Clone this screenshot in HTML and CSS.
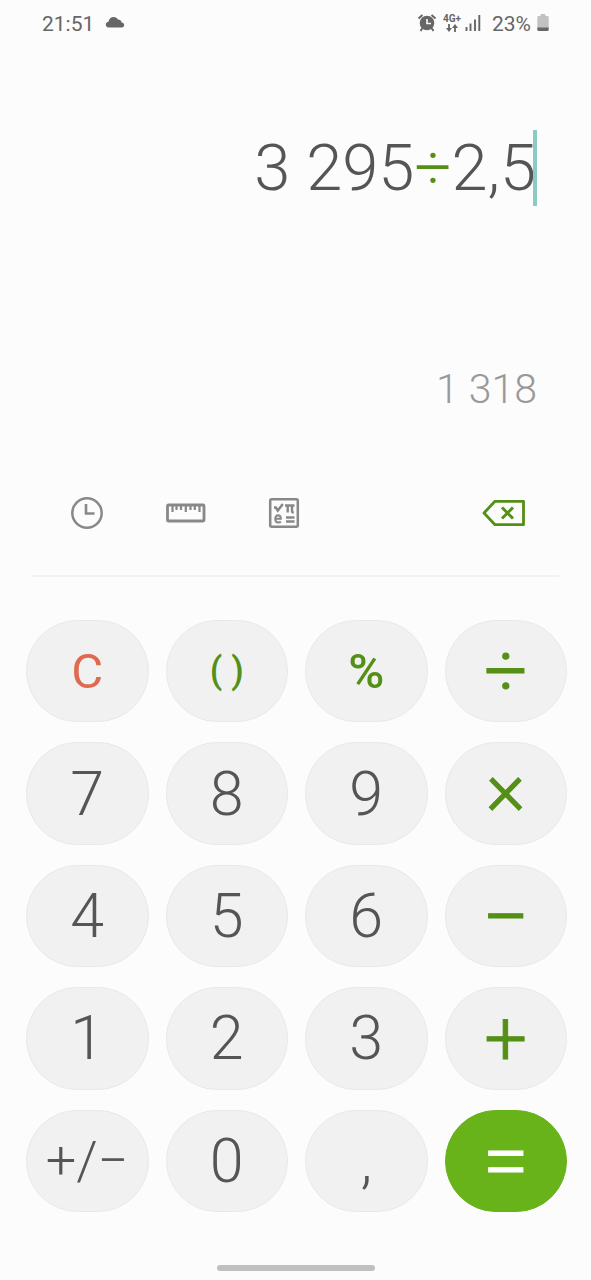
FILE: index.html
```html
<!DOCTYPE html>
<html lang="en">
<head>
<meta charset="utf-8">
<meta name="viewport" content="width=device-width, initial-scale=1">
<title>Calculator</title>
<link rel="stylesheet" href="styles.css">
</head>
<body>
<header class="status">
  <time class="status-text">21:51</time>
  <svg class="cloud" width="20" height="12" viewBox="0 0 20 12" aria-hidden="true"><path fill="currentColor" d="M4 11.500C1.500 11.500.8 10 .8 8.600c0-1.700 1.300-2.700 2.700-2.900C4 2.800 6 1 8.600 1c2 0 3.500 1 4.300 2.600 2 0 3.500 1.300 3.700 3 1.500.2 2.600 1.100 2.600 2.500 0 1.500-1 2.400-2.400 2.400z"/></svg>
  <div class="status-right">
    <svg width="20" height="20" viewBox="0 0 20 20" aria-hidden="true"><circle cx="10" cy="10" r="7.300" fill="currentColor"/><path d="M1.500 5.500l4-3.500M18.500 5.500l-4-3.500M5.500 15l-2 3M14.500 15l2 3" stroke="currentColor" stroke-width="2" fill="none"/><path d="M10 6v4.500h4" stroke="#fcfcfc" stroke-width="1.600" fill="none"/></svg>
    <div class="network">
      <span>4G+</span>
      <svg width="12" height="8" viewBox="0 0 12 8" aria-hidden="true"><path d="M3 0v5M9 8V3" stroke="currentColor" stroke-width="1.800"/><path d="M0 4h6L3 8zM6 4h6L9 0z" fill="currentColor"/></svg>
    </div>
    <svg width="16" height="18" viewBox="0 0 16 18" aria-hidden="true"><path d="M1.500 13v4M5.500 9.500V17M10 5.500V17M14.300 1v16" stroke="currentColor" stroke-width="1.900"/></svg>
    <span class="status-text percent">23%</span>
    <svg width="12" height="18" viewBox="0 0 12 18" aria-hidden="true"><path d="M1.500 2H3.500V1q0-1 1-1h3q1 0 1 1v1h2q1.200 0 1.200 1.200V14H.3V3.200Q.3 2 1.500 2z" fill="#c2c2c2"/><path d="M.3 13.500h11.400v2q0 1.500-1.500 1.500H1.800Q.3 17 .3 15.500z" fill="currentColor"/></svg>
  </div>
</header>
<main class="calculator">
  <section class="display" aria-label="Display">
    <div class="expression"><span class="formula">3 295<span class="operator">÷</span>2,5</span><span class="caret"></span></div>
    <output class="result">1 318</output>
  </section>
  <nav class="tools" aria-label="Tools">
    <button class="tool" type="button" aria-label="History"><svg width="34" height="34" viewBox="0 0 34 34"><g fill="none" stroke="currentColor"><circle cx="17" cy="17" r="14.700" stroke-width="2.500"/><path d="M16 8v9.500H24.500" stroke-width="2.600"/></g></svg></button>
    <button class="tool" type="button" aria-label="Unit converter"><svg width="40" height="20" viewBox="0 0 40 20"><g fill="none" stroke="currentColor"><rect x="1.500" y="2" width="36.500" height="16" rx="1" stroke-width="2.800"/><path d="M6.500 3v6M10.500 3v4M15 3v4M19.800 3v6M24.500 3v4M28.800 3v4M33.500 3v6" stroke-width="2.200"/></g></svg></button>
    <button class="tool" type="button" aria-label="Scientific mode"><svg width="32" height="32" viewBox="0 0 32 32"><g fill="none" stroke="currentColor"><rect x="2.200" y="2.200" width="27.600" height="27.600" rx="1.500" stroke-width="2.500"/><path d="M6 10.500h1.800l2 3L14.800 7" stroke-width="2.500"/><path d="M17 8.500h9.500M19.700 9v6.500M24 9v5.200q0 1.300 1.800 1" stroke-width="2.400"/><path d="M18 20.500h8.500M18 24.500h8.500" stroke-width="2.500"/><path d="M7.500 21.700h5.300q0-3.500-2.600-3.500-2.900 0-2.900 3.700 0 3.500 3.200 3.500 1.400 0 2.400-.8" stroke-width="2"/></g></svg></button>
    <button class="tool backspace" type="button" aria-label="Backspace"><svg width="44" height="28" viewBox="0 0 44 28"><g fill="none" stroke="currentColor"><path d="M13 2.300H41.500v23.400H13L2 14z" stroke-width="2.800" stroke-linejoin="round"/><path d="M20 8.500l11 11M31 8.500l-11 11" stroke-width="3"/></g></svg></button>
  </nav>
  <section class="keypad" aria-label="Keypad">
    <button class="key clear" type="button">C</button>
    <button class="key brackets" type="button">( )</button>
    <button class="key modulo" type="button">%</button>
    <button class="key math" type="button">÷</button>
    <button class="key" type="button">7</button>
    <button class="key" type="button">8</button>
    <button class="key" type="button">9</button>
    <button class="key math times" type="button">×</button>
    <button class="key" type="button">4</button>
    <button class="key" type="button">5</button>
    <button class="key" type="button">6</button>
    <button class="key math wide minus" type="button">−</button>
    <button class="key" type="button">1</button>
    <button class="key" type="button">2</button>
    <button class="key" type="button">3</button>
    <button class="key math" type="button">+</button>
    <button class="key sign" type="button">+/−</button>
    <button class="key" type="button">0</button>
    <button class="key" type="button">,</button>
    <button class="key math wide equals" type="button">=</button>
  </section>
</main>
<div class="home-bar"></div>
</body>
</html>
```
FILE: styles.css
```css
* {
  box-sizing: border-box;
}

body {
  display: flex;
  flex-direction: column;
  min-height: 100vh;
  margin: 0;
  background: #fcfcfc;
  color: #555;
  font-family: Roboto, "Liberation Sans", sans-serif;
}

button {
  padding: 0;
  border: 0;
  background: none;
  color: inherit;
  font: inherit;
}

svg {
  display: block;
}

.status {
  display: flex;
  align-items: center;
  height: 46px;
  padding: 0 42px;
  color: #666;
}

.status-text {
  padding-top: 1px;
  font-size: 21px;
  line-height: 24px;
}

.cloud {
  margin: 0 0 2px 11px;
}

.status-right {
  display: flex;
  align-items: center;
  margin-left: auto;
}

.network {
  display: flex;
  flex-direction: column;
  align-items: center;
  margin: 0 4px 0 6px;
  font-size: 10px;
  font-weight: 700;
  line-height: 10px;
}

.percent {
  margin: 0 6px 0 11px;
}

.calculator {
  display: flex;
  flex: 1;
  flex-direction: column;
}

.display {
  display: flex;
  flex-direction: column;
  align-items: flex-end;
  height: 434px;
  padding: 84px 54px 0 32px;
}

.expression {
  display: flex;
  align-items: center;
  font-size: 65px;
  font-weight: 300;
  line-height: 76px;
}

.operator {
  color: #549016;
}

.caret {
  width: 4px;
  height: 76px;
  margin-left: -3px;
  background: #8accc4;
}

.result {
  margin-top: 158px;
  color: #999;
  font-size: 41px;
  font-weight: 300;
  line-height: 50px;
}

.tools {
  display: flex;
  align-items: center;
  gap: 62px;
  height: 97px;
  margin: 0 32px;
  padding: 0 33px 30px 38px;
  border-bottom: 2px solid #f2f2f2;
  color: #888;
}

.backspace {
  margin-left: auto;
  color: #549016;
}

.keypad {
  display: grid;
  flex: 1;
  grid-template-columns: repeat(4, 1fr);
  grid-auto-rows: 1fr;
  gap: 20px 17px;
  padding: 43px 24px 0 26px;
}

.key {
  min-height: 72px;
  border: 1px solid #e9e9e9;
  border-radius: 51px;
  background: #f1f1f1;
  font-size: 61px;
  font-weight: 300;
  line-height: 70px;
}

.clear {
  padding-top: 2px;
  color: #e06a50;
  font-size: 49px;
  font-weight: 400;
}

.brackets {
  color: #549016;
  font-size: 36px;
  font-weight: 500;
}

.modulo {
  padding-top: 2px;
  color: #549016;
  font-size: 49px;
  font-weight: 500;
}

.math {
  color: #549016;
  font-size: 76px;
  font-weight: 300;
  -webkit-text-stroke: 1px currentColor;
}

.times {
  padding-bottom: 12px;
}

.wide {
  font-size: 84px;
}

.minus {
  padding-top: 4px;
}

.sign {
  font-size: 54px;
}

.equals {
  border-color: #68b21a;
  background: #68b21a;
  color: #fff;
}

.home-bar {
  width: 158px;
  height: 6px;
  margin: 53px auto 9px;
  border-radius: 3px;
  background: #c0c0c0;
}
```
